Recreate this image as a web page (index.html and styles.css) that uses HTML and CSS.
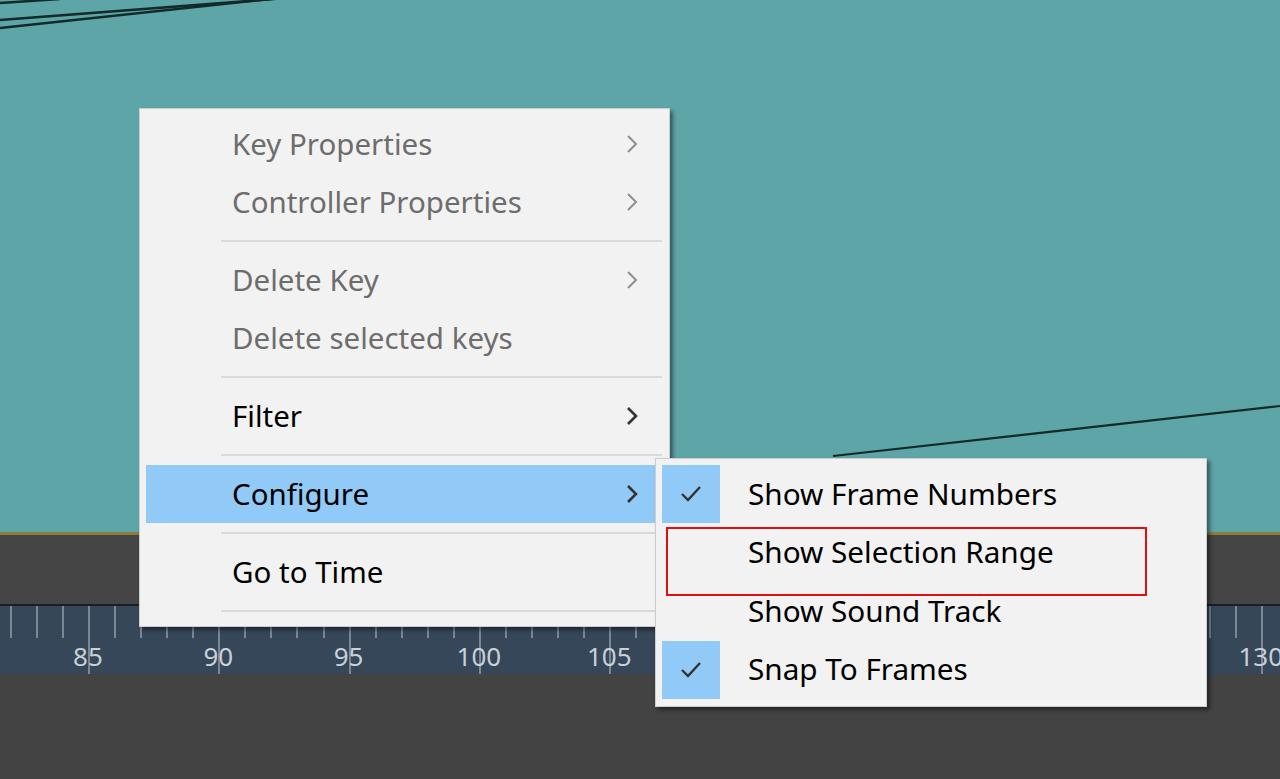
FILE: index.html
```html
<!DOCTYPE html>
<html>
<head>
<meta charset="utf-8">
<link rel="stylesheet" href="styles.css">
</head>
<body>
<div class="app">
  <div class="viewport">
    <svg class="curves" width="1280" height="533" viewBox="0 0 1280 533">
      <line x1="0" y1="3" x2="60" y2="-1" stroke="#132a29" stroke-width="2.5"/>
      <line x1="0" y1="20" x2="300" y2="-3" stroke="#132a29" stroke-width="2.5"/>
      <line x1="0" y1="28" x2="280" y2="-2" stroke="#132a29" stroke-width="2.5"/>
      <line x1="833" y1="456" x2="1280" y2="406" stroke="#132a29" stroke-width="2.2"/>
    </svg>
  </div>
  <div class="gold"></div>
  <div class="band"></div>
  <div class="ruler">
    <div class="track">
      <span class="tick"></span><span class="tick"></span><span class="tick"></span><span class="tick"></span>
      <span class="tick major"><b>85</b></span><span class="tick"></span><span class="tick"></span><span class="tick"></span><span class="tick"></span>
      <span class="tick major"><b>90</b></span><span class="tick"></span><span class="tick"></span><span class="tick"></span><span class="tick"></span>
      <span class="tick major"><b>95</b></span><span class="tick"></span><span class="tick"></span><span class="tick"></span><span class="tick"></span>
      <span class="tick major"><b>100</b></span><span class="tick"></span><span class="tick"></span><span class="tick"></span><span class="tick"></span>
      <span class="tick major"><b>105</b></span><span class="tick"></span><span class="tick"></span><span class="tick"></span><span class="tick"></span>
      <span class="tick major"></span><span class="tick"></span><span class="tick"></span><span class="tick"></span><span class="tick"></span>
      <span class="tick major"></span><span class="tick"></span><span class="tick"></span><span class="tick"></span><span class="tick"></span>
      <span class="tick major"></span><span class="tick"></span><span class="tick"></span><span class="tick"></span><span class="tick"></span>
      <span class="tick major"></span><span class="tick"></span><span class="tick"></span><span class="tick"></span><span class="tick"></span>
      <span class="tick major"><b>130</b></span><span class="tick"></span><span class="tick"></span>
    </div>
  </div>
  <div class="bottom"></div>
</div>

<div class="menu main-menu">
  <div class="item disabled"><span class="label">Key Properties</span><svg class="chev" width="12" height="20" viewBox="0 0 12 20"><polyline points="2,2 10,10 2,18" fill="none" stroke-width="2"/></svg></div>
  <div class="item disabled"><span class="label">Controller Properties</span><svg class="chev" width="12" height="20" viewBox="0 0 12 20"><polyline points="2,2 10,10 2,18" fill="none" stroke-width="2"/></svg></div>
  <div class="sep"></div>
  <div class="item disabled"><span class="label">Delete Key</span><svg class="chev" width="12" height="20" viewBox="0 0 12 20"><polyline points="2,2 10,10 2,18" fill="none" stroke-width="2"/></svg></div>
  <div class="item disabled"><span class="label">Delete selected keys</span></div>
  <div class="sep"></div>
  <div class="item"><span class="label">Filter</span><svg class="chev" width="12" height="20" viewBox="0 0 12 20"><polyline points="2,2 10,10 2,18" fill="none" stroke-width="2.6"/></svg></div>
  <div class="sep"></div>
  <div class="item active"><span class="label">Configure</span><svg class="chev" width="12" height="20" viewBox="0 0 12 20"><polyline points="2,2 10,10 2,18" fill="none" stroke-width="2.6"/></svg></div>
  <div class="sep"></div>
  <div class="item"><span class="label">Go to Time</span></div>
  <div class="sep"></div>
</div>

<div class="menu sub-menu">
  <div class="sitem"><span class="check on"><svg width="24" height="20" viewBox="0 0 24 20"><polyline points="3,10 9,16 21,3" fill="none" stroke="#333" stroke-width="2.4"/></svg></span><span class="label">Show Frame Numbers</span></div>
  <div class="sitem"><span class="check"></span><span class="label">Show Selection Range</span></div>
  <div class="sitem"><span class="check"></span><span class="label">Show Sound Track</span></div>
  <div class="sitem"><span class="check on"><svg width="24" height="20" viewBox="0 0 24 20"><polyline points="3,10 9,16 21,3" fill="none" stroke="#333" stroke-width="2.4"/></svg></span><span class="label">Snap To Frames</span></div>
</div>

<div class="annot"></div>
</body>
</html>
```

FILE: styles.css
```css
html, body {
  margin: 0;
  padding: 0;
}
body {
  width: 1280px;
  height: 779px;
  overflow: hidden;
  position: relative;
  font-family: "Noto Sans", "Open Sans", sans-serif;
}
.app {
  display: flex;
  flex-direction: column;
  height: 779px;
}
.viewport {
  height: 532px;
  background: #5ea5a8;
  position: relative;
  overflow: hidden;
}
.curves {
  position: absolute;
  left: 0;
  top: 0;
}
.gold {
  height: 3px;
  background: #8a7b3e;
}
.band {
  height: 69px;
  background: #454545;
}
.ruler {
  height: 68px;
  background: #354759;
  border-top: 2px solid #1c1f22;
  overflow: hidden;
}
.track {
  display: flex;
  margin-left: -29.3px;
  height: 100%;
}
.tick {
  flex: 0 0 26.07px;
  position: relative;
  height: 100%;
}
.tick::before {
  content: "";
  position: absolute;
  left: 50%;
  top: 0;
  width: 2px;
  height: 32px;
  background: #7b8794;
}
.tick.major::before {
  height: 68px;
}
.tick b {
  position: absolute;
  left: 50%;
  top: 35px;
  transform: translateX(-50%);
  font-weight: normal;
  font-size: 26px;
  line-height: 30px;
  color: #c9d0d7;
  font-family: "Noto Sans", sans-serif;
}
.bottom {
  flex: 1;
  background: #434343;
}

.menu {
  position: absolute;
  background: #f2f2f2;
  border: 1px solid #cdcdcd;
  box-shadow: 3px 3px 4px rgba(0, 0, 0, 0.45);
  padding: 6px 0;
  box-sizing: border-box;
}
.main-menu {
  left: 139px;
  top: 108px;
  width: 531px;
  height: 519px;
}
.item {
  height: 58px;
  margin: 0 6px;
  padding: 0 25px 0 86px;
  display: flex;
  align-items: center;
  justify-content: space-between;
  color: #000;
  font-size: 29.5px;
}
.label {
  position: relative;
  top: -1px;
}
.item.disabled {
  color: #6d6d6d;
}
.item .chev {
  stroke: #333;
}
.item.disabled .chev {
  stroke: #8f8f8f;
}
.item.active {
  background: #91c9f7;
}
.sep {
  height: 20px;
  display: flex;
  align-items: center;
  padding: 0 7px 0 81px;
}
.sep::before {
  content: "";
  flex: 1;
  height: 2px;
  background: #dadada;
}

.sub-menu {
  left: 655px;
  top: 458px;
  width: 552px;
  height: 249px;
}
.sitem {
  height: 58.5px;
  margin: 0 6px;
  display: flex;
  align-items: center;
  font-size: 29.7px;
  color: #000;
}
.check {
  width: 58px;
  height: 58px;
  flex: 0 0 58px;
  display: flex;
  align-items: center;
  justify-content: center;
  margin-right: 28px;
}
.check.on {
  background: #91c9f7;
}
.annot {
  position: absolute;
  left: 666px;
  top: 527px;
  width: 481px;
  height: 69px;
  border: 2px solid #e01010;
  box-sizing: border-box;
}
```
